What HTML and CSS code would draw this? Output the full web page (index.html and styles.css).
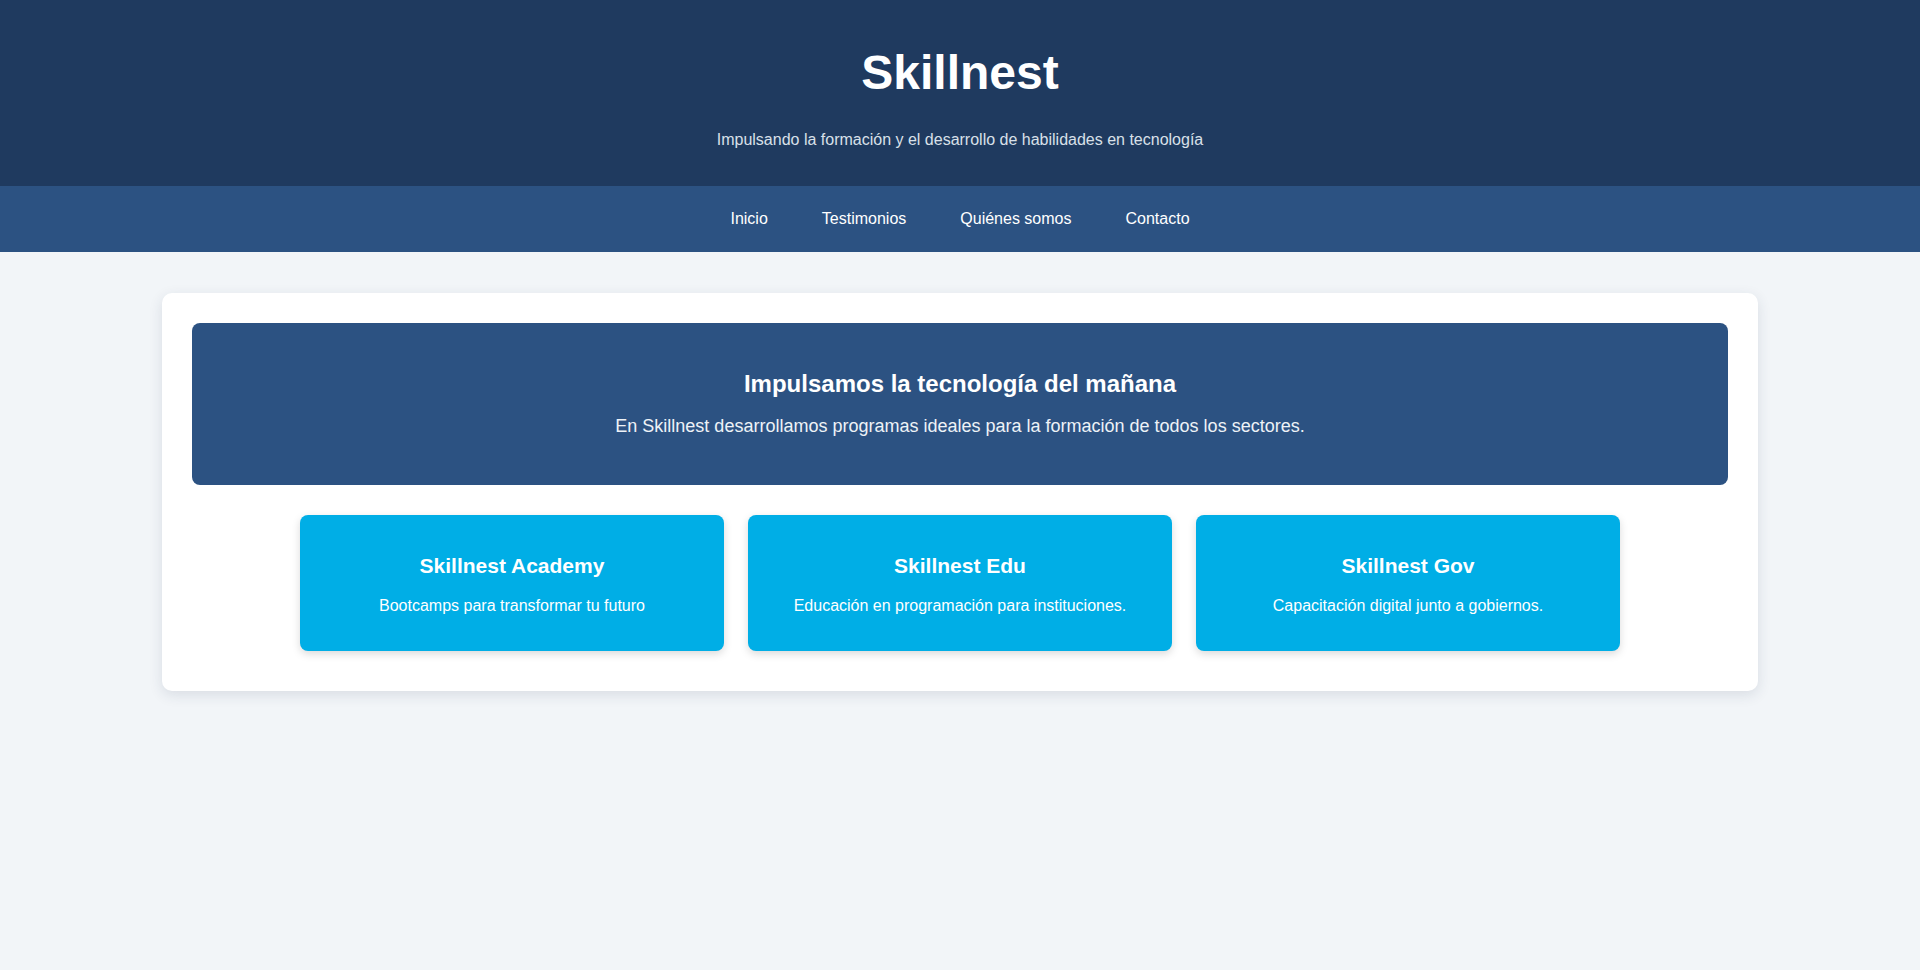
FILE: index.html
```html
<!DOCTYPE html>
<html lang="es">
<head>
<meta charset="utf-8">
<title>Skillnest</title>
<link rel="stylesheet" href="styles.css">
</head>
<body>
<header class="site-header">
  <h1 class="brand">Skillnest</h1>
  <p class="tagline">Impulsando la formación y el desarrollo de habilidades en tecnología</p>
</header>
<nav class="main-nav">
  <a href="#" class="nav-link">Inicio</a>
  <a href="#" class="nav-link">Testimonios</a>
  <a href="#" class="nav-link">Quiénes somos</a>
  <a href="#" class="nav-link">Contacto</a>
</nav>
<main class="content">
  <section class="panel">
    <div class="hero">
      <h2 class="hero-title">Impulsamos la tecnología del mañana</h2>
      <p class="hero-text">En Skillnest desarrollamos programas ideales para la formación de todos los sectores.</p>
    </div>
    <div class="services">
      <div class="service">
        <h3 class="service-title">Skillnest Academy</h3>
        <p class="service-text">Bootcamps para transformar tu futuro</p>
      </div>
      <div class="service">
        <h3 class="service-title">Skillnest Edu</h3>
        <p class="service-text">Educación en programación para instituciones.</p>
      </div>
      <div class="service">
        <h3 class="service-title">Skillnest Gov</h3>
        <p class="service-text">Capacitación digital junto a gobiernos.</p>
      </div>
    </div>
  </section>
</main>
</body>
</html>
```
FILE: styles.css
```css
* { box-sizing: border-box; }
html, body {
  margin: 0;
  padding: 0;
}
body {
  font-family: "Liberation Sans", Arial, Helvetica, sans-serif;
  background: #f2f5f8;
  color: #1f2937;
  min-height: 970px;
}
.site-header {
  background: #1f3a5f;
  color: #ffffff;
  text-align: center;
  padding: 45px 20px 37px;
}
.brand {
  margin: 0 0 31px;
  font-size: 48px;
  font-weight: 700;
  line-height: normal;
}
.tagline {
  margin: 0;
  font-size: 16px;
  color: #d9e0e9;
}
.main-nav {
  background: #2c5282;
  height: 66px;
  display: flex;
  justify-content: center;
  align-items: center;
  gap: 54px;
}
.nav-link {
  color: #ffffff;
  text-decoration: none;
  font-size: 16px;
}
.content {
  padding: 41px 0 40px;
}
.panel {
  max-width: 1596px;
  margin: 0 auto;
  background: #ffffff;
  border-radius: 10px;
  padding: 30px 30px 40px;
  box-shadow: 0 4px 14px rgba(30, 50, 80, 0.12);
}
.hero {
  background: #2c5282;
  color: #ffffff;
  text-align: center;
  border-radius: 8px;
  padding: 47px 30px 48px;
}
.hero-title {
  margin: 0 0 18px;
  font-size: 24px;
  font-weight: 700;
}
.hero-text {
  margin: 0;
  font-size: 18px;
  color: #eef2f7;
}
.services {
  max-width: 1320px;
  margin: 30px auto 0;
  display: grid;
  grid-template-columns: repeat(3, 1fr);
  gap: 24px;
}
.service {
  background: #00aee6;
  color: #ffffff;
  text-align: center;
  border-radius: 8px;
  padding: 39px 20px 36px;
  box-shadow: 0 3px 8px rgba(0, 0, 0, 0.15);
}
.service-title {
  margin: 0 0 19px;
  font-size: 21px;
  font-weight: 700;
}
.service-text {
  margin: 0;
  font-size: 16px;
}
```
